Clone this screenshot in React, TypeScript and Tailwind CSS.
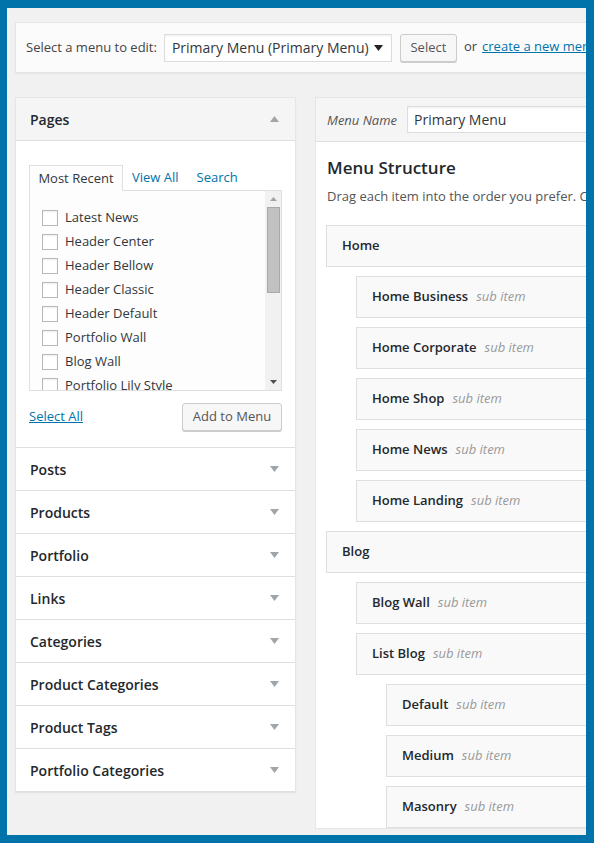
const pages = [
  "Latest News",
  "Header Center",
  "Header Bellow",
  "Header Classic",
  "Header Default",
  "Portfolio Wall",
  "Blog Wall",
  "Portfolio Lily Style",
];

const sections = [
  "Posts",
  "Products",
  "Portfolio",
  "Links",
  "Categories",
  "Product Categories",
  "Product Tags",
  "Portfolio Categories",
];

const menuItems = [
  { title: "Home", depth: 0 },
  { title: "Home Business", depth: 1 },
  { title: "Home Corporate", depth: 1 },
  { title: "Home Shop", depth: 1 },
  { title: "Home News", depth: 1 },
  { title: "Home Landing", depth: 1 },
  { title: "Blog", depth: 0 },
  { title: "Blog Wall", depth: 1 },
  { title: "List Blog", depth: 1 },
  { title: "Default", depth: 2 },
  { title: "Medium", depth: 2 },
  { title: "Masonry", depth: 2 },
];

const indent = ["ml-0", "ml-[30px]", "ml-[60px]"];

function Arrow({ up = false, color = "#a0a5aa" }: { up?: boolean; color?: string }) {
  return (
    <svg width="9" height="6" viewBox="0 0 9 6" className="shrink-0">
      <polygon points={up ? "0,6 9,6 4.5,0" : "0,0 9,0 4.5,6"} fill={color} />
    </svg>
  );
}

function SectionTitle({ label, open = false }: { label: string; open?: boolean }) {
  return (
    <div
      className={`flex h-[43px] items-center justify-between border-b border-[#dfdfdf] pl-[14px] pr-[16px] ${
        open ? "bg-[#f5f5f5]" : "bg-white"
      }`}
    >
      <span className="text-[14px] font-semibold text-[#23282d]">{label}</span>
      <Arrow up={open} />
    </div>
  );
}

function PagesBox() {
  return (
    <div className="border-b border-[#dfdfdf] bg-white px-[13px] pb-[16px] pt-[24px]">
      {/* tabs */}
      <div className="flex items-end text-[13px] leading-none">
        <div className="relative z-10 -mb-px flex h-[26px] w-[94px] items-center justify-center border border-b-0 border-[#dfdfdf] bg-[#fdfdfd] text-[#32373c]">
          Most Recent
        </div>
        <span className="ml-[9px] flex h-[25px] items-center text-[#0073aa]">View All</span>
        <span className="ml-[18px] flex h-[25px] items-center text-[#0073aa]">Search</span>
      </div>
      <div className="flex h-[201px] overflow-hidden border border-[#dfdfdf] bg-[#fdfdfd]">
        <div className="flex-1 pl-[12px] pt-[15px]">
          {pages.map((p) => (
            <div key={p} className="flex h-[24px] items-center">
              <span className="h-[16px] w-[16px] shrink-0 border border-[#b4b9be] bg-white shadow-[inset_0_1px_2px_rgba(0,0,0,0.07)]" />
              <span className="ml-[7px] text-[13px] text-[#32373c]">{p}</span>
            </div>
          ))}
        </div>
        <div className="flex w-[16px] flex-col items-center bg-[#f1f1f1]">
          <div className="flex h-[16px] items-center">
            <svg width="7" height="4" viewBox="0 0 7 4">
              <polygon points="0,4 7,4 3.5,0" fill="#a3a3a3" />
            </svg>
          </div>
          <div className="h-[86px] w-[13px] border border-[#a9a9a9] bg-[#c1c1c1]" />
          <div className="flex-1" />
          <div className="flex h-[16px] items-center">
            <svg width="7" height="4" viewBox="0 0 7 4">
              <polygon points="0,0 7,0 3.5,4" fill="#505050" />
            </svg>
          </div>
        </div>
      </div>
      <div className="mt-[12px] flex items-center justify-between">
        <a className="text-[13px] text-[#0073aa] underline">Select All</a>
        <button className="h-[28px] w-[100px] rounded-[3px] border border-[#cccccc] bg-[#f7f7f7] text-[13px] text-[#555555] shadow-[0_1px_0_#cccccc]">
          Add to Menu
        </button>
      </div>
    </div>
  );
}

export default function App() {
  return (
    <div className="h-[843px] w-[594px] bg-[#0073aa] pb-[8px] pl-[7px] pr-[8px] pt-[8px] font-['Open_Sans',sans-serif]">
      <div className="h-full w-full overflow-hidden bg-[#f1f1f1]">
        <div className="w-[760px] pl-[8px] pt-[14px]">
          {/* menu picker */}
          <div className="flex h-[51px] items-center border border-[#e5e5e5] bg-[#fbfbfb] pl-[10px] text-[13px] text-[#444444] shadow-[0_1px_1px_rgba(0,0,0,0.04)]">
            <span>Select a menu to edit:</span>
            <div className="ml-[7px] flex h-[28px] w-[228px] items-center justify-between border border-[#dddddd] bg-white pl-[7px] pr-[8px] text-[14px] text-[#32373c] shadow-[inset_0_1px_2px_rgba(0,0,0,0.07)]">
              <span>Primary Menu (Primary Menu)</span>
              <Arrow color="#222222" />
            </div>
            <button className="ml-[8px] h-[28px] w-[57px] rounded-[3px] border border-[#cccccc] bg-[#f7f7f7] text-[13px] text-[#555555] shadow-[0_1px_0_#cccccc]">
              Select
            </button>
            <span className="-mt-[2px] ml-[7px]">or</span>
            <a className="-mt-[2px] ml-[5px] text-[#0073aa] underline">create a new menu</a>
          </div>

          <div className="mt-[24px] flex items-start">
            {/* left column */}
            <div className="w-[281px] shrink-0 border border-b-0 border-[#e5e5e5] shadow-[0_1px_1px_rgba(0,0,0,0.06)]">
              <SectionTitle label="Pages" open />
              <PagesBox />
              {sections.map((s) => (
                <SectionTitle key={s} label={s} />
              ))}
            </div>

            {/* right column */}
            <div className="ml-[19px] w-[440px] shrink-0 border border-[#e5e5e5] bg-white">
              <div className="flex h-[44px] items-center border-b border-[#dfdfdf] bg-[#f5f5f5] pl-[11px]">
                <span className="mt-[2px] text-[13px] italic text-[#555555]">Menu Name</span>
                <div className="ml-[10px] flex h-[27px] flex-1 items-center border border-[#dddddd] bg-white pl-[6px] text-[14px] text-[#32373c] shadow-[inset_0_1px_2px_rgba(0,0,0,0.07)]">
                  Primary Menu
                </div>
              </div>
              <div className="pl-[10px] pt-[14px]">
                <h3 className="pl-[1px] text-[17px] font-semibold leading-[24px] text-[#23282d]">
                  Menu Structure
                </h3>
                <p className="mt-[6px] whitespace-nowrap pl-[1px] text-[13px] leading-[20px] text-[#555555]">
                  Drag each item into the order you prefer. Click the arrow on the right of the item to reveal additional configuration options.
                </p>
                <div className="mt-[19px] flex flex-col gap-[9px]">
                  {menuItems.map((m) => (
                    <div
                      key={m.title}
                      className={`flex h-[42px] items-center border border-[#dfdfdf] bg-[#f9f9f9] pl-[15px] ${indent[m.depth]}`}
                    >
                      <span className="text-[13px] font-semibold text-[#23282d]">{m.title}</span>
                      {m.depth > 0 && (
                        <span className="ml-[8px] text-[13px] italic text-[#999999]">sub item</span>
                      )}
                    </div>
                  ))}
                </div>
              </div>
            </div>
          </div>
        </div>
      </div>
    </div>
  );
}
